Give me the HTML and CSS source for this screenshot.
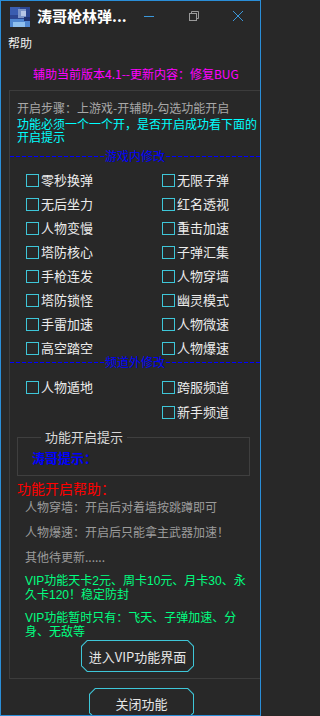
FILE: index.html
```html
<!DOCTYPE html>
<html lang="zh">
<head>
<meta charset="utf-8">
<title>涛哥枪林弹雨</title>
<link rel="stylesheet" href="styles.css">
</head>
<body>
<div class="window">
  <div class="titlebar">
    <svg class="app-icon" width="20" height="20" viewBox="0 0 20 20">
      <rect width="20" height="20" fill="#2c4691"/>
      <rect x="0" y="0" width="10" height="8" fill="#3a5db0"/>
      <rect x="8" y="2" width="8" height="9" fill="#7d95c8"/>
      <rect x="11" y="4" width="5" height="5" fill="#b7c6e6"/>
      <rect x="0" y="12" width="20" height="8" fill="#4f86d0"/>
      <rect x="3" y="15" width="12" height="5" fill="#8fc0ee"/>
      <rect x="14" y="10" width="6" height="4" fill="#1f3270"/>
    </svg>
    <div class="title">涛哥枪林弹...</div>
    <div class="ctl">
      <svg width="12" height="12" viewBox="0 0 12 12"><line x1="1" y1="6.5" x2="11" y2="6.5" stroke="#3b97d9" stroke-width="1"/></svg>
    </div>
    <div class="ctl">
      <svg width="12" height="12" viewBox="0 0 12 12" fill="none" stroke="#9a9a9a" stroke-width="1"><rect x="1.5" y="3.5" width="7" height="7"/><path d="M3.5 3.5V1.5H10.5V8.5H8.5"/></svg>
    </div>
    <div class="ctl ctl-close">
      <svg width="12" height="12" viewBox="0 0 12 12"><path d="M1 1L11 11M11 1L1 11" stroke="#3b97d9" stroke-width="1"/></svg>
    </div>
  </div>
  <div class="menu">帮助</div>
  <div class="version">辅助当前版本4.1--更新内容：修复BUG</div>

  <div class="panel">
    <div class="steps">开启步骤：上游戏-开辅助-勾选功能开启</div>
    <div class="notice">功能必须一个一个开，是否开启成功看下面的<br>开启提示</div>

    <div class="divider"><i class="dash"></i><span>游戏内修改</span><i class="dash"></i></div>
    <div class="checks">
      <label class="chk"><span class="box"></span>零秒换弹</label>
      <label class="chk"><span class="box"></span>无限子弹</label>
      <label class="chk"><span class="box"></span>无后坐力</label>
      <label class="chk"><span class="box"></span>红名透视</label>
      <label class="chk"><span class="box"></span>人物变慢</label>
      <label class="chk"><span class="box"></span>重击加速</label>
      <label class="chk"><span class="box"></span>塔防核心</label>
      <label class="chk"><span class="box"></span>子弹汇集</label>
      <label class="chk"><span class="box"></span>手枪连发</label>
      <label class="chk"><span class="box"></span>人物穿墙</label>
      <label class="chk"><span class="box"></span>塔防锁怪</label>
      <label class="chk"><span class="box"></span>幽灵模式</label>
      <label class="chk"><span class="box"></span>手雷加速</label>
      <label class="chk"><span class="box"></span>人物微速</label>
      <label class="chk"><span class="box"></span>高空踏空</label>
      <label class="chk"><span class="box"></span>人物爆速</label>
    </div>

    <div class="divider second"><i class="dash"></i><span>频道外修改</span><i class="dash"></i></div>
    <div class="checks checks2">
      <label class="chk"><span class="box"></span>人物遁地</label>
      <label class="chk"><span class="box"></span>跨服频道</label>
      <span></span>
      <label class="chk"><span class="box"></span>新手频道</label>
    </div>

    <fieldset class="hint">
      <legend>功能开启提示</legend>
      <div class="hint-text">涛哥提示：</div>
    </fieldset>

    <div class="help-title">功能开启帮助：</div>
    <div class="help-line first">人物穿墙：开启后对着墙按跳蹲即可</div>
    <div class="help-line">人物爆速：开启后只能拿主武器加速！</div>
    <div class="help-line">其他待更新......</div>
    <div class="vip first">VIP功能天卡2元、周卡10元、月卡30、永<br>久卡120！稳定防封</div>
    <div class="vip">VIP功能暂时只有：飞天、子弹加速、分<br>身、无敌等</div>

    <div class="btn btn-vip"><div class="btn-inner">进入VIP功能界面</div></div>
  </div>

  <div class="btn btn-close"><div class="btn-inner">关闭功能</div></div>
</div>
</body>
</html>
```

FILE: styles.css
```css
html, body {
  margin: 0;
  padding: 0;
  background: #282828;
}
body {
  width: 261px;
  height: 716px;
  overflow: hidden;
  font-family: "Noto Sans CJK SC", "Noto Sans", sans-serif;
}
.window {
  box-sizing: border-box;
  width: 261px;
  height: 716px;
  border: 1px solid #2a8ed8;
  overflow: hidden;
  background: #282828;
}
.titlebar {
  display: flex;
  align-items: center;
  height: 33px;
}
.app-icon {
  margin-left: 9px;
  margin-top: -2px;
  flex: none;
}
.title {
  flex: 1;
  min-width: 0;
  margin-left: 7px;
  color: #ffffff;
  font-size: 15px;
  font-weight: bold;
  line-height: 20px;
  margin-top: -3px;
  white-space: nowrap;
}
.ctl {
  flex: none;
  width: 45px;
  height: 30px;
  display: flex;
  align-items: center;
  justify-content: center;
  margin-top: -4px;
}
.ctl-close {
  width: 44px;
}
.menu {
  height: 17px;
  line-height: 17px;
  padding-left: 7px;
  color: #f0f0f0;
  font-size: 12px;
}
.version {
  margin-top: 16px;
  padding-left: 32px;
  color: #ff00ff;
  font-size: 12px;
  line-height: 14px;
  white-space: nowrap;
}
.panel {
  box-sizing: border-box;
  margin-top: 9px;
  margin-left: 8px;
  height: 589px;
  border: 1px solid #3c3c3c;
  border-right: none;
  overflow: hidden;
}
.steps {
  margin-top: 10px;
  padding-left: 7px;
  color: #a8a8a8;
  font-size: 12px;
  line-height: 14px;
  white-space: nowrap;
}
.notice {
  margin-top: 4px;
  padding-left: 7px;
  color: #00ffff;
  font-family: "Liberation Sans", "Noto Sans CJK SC", sans-serif;
  font-size: 12px;
  line-height: 13px;
  white-space: nowrap;
}
.divider {
  margin-top: 4px;
  height: 14px;
  display: flex;
  align-items: center;
}
.divider .dash {
  flex: 1;
  height: 1px;
  margin-top: 1px;
  background-image: repeating-linear-gradient(90deg, #0000ff 0, #0000ff 4px, transparent 4px, transparent 6px);
}
.divider span {
  flex: none;
  color: #0000ff;
  font-size: 12px;
  line-height: 14px;
  padding: 0 1px;
}
.divider.second {
  margin-top: -3px;
}
.checks {
  display: grid;
  grid-template-columns: 136px 1fr;
  grid-auto-rows: 20px;
  row-gap: 4px;
  padding-left: 16px;
  margin-top: 7px;
}
.checks2 {
  margin-top: 8px;
  row-gap: 5px;
}
.chk {
  display: flex;
  align-items: center;
  gap: 2px;
  color: #ececec;
  font-size: 13px;
  line-height: 20px;
  white-space: nowrap;
}
.box {
  box-sizing: border-box;
  width: 13px;
  height: 13px;
  border: 1px solid #3ec6d8;
  flex: none;
}
.hint {
  margin: 7px 10px 0 7px;
  padding: 5px 14px 9px 14px;
  border: 1px solid #3f3f3f;
  min-width: 0;
}
.hint legend {
  margin-left: 9px;
  padding: 0 4px;
  color: #d8d8d8;
  font-size: 13px;
  line-height: 16px;
}
.hint-text {
  color: #0000ff;
  font-size: 13px;
  font-weight: bold;
  line-height: 16px;
}
.help-title {
  margin-top: 3px;
  padding-left: 7px;
  color: #ff0000;
  font-size: 14px;
  line-height: 18px;
}
.help-line {
  margin-top: 11px;
  padding-left: 15px;
  color: #9c9c9c;
  font-size: 12px;
  line-height: 14px;
  white-space: nowrap;
}
.help-line.first {
  margin-top: 3px;
}
.vip {
  margin-top: 10px;
  padding-left: 15px;
  color: #00ff80;
  font-family: "Liberation Sans", "Noto Sans CJK SC", sans-serif;
  font-size: 12px;
  line-height: 13.5px;
  white-space: nowrap;
}
.vip.first {
  margin-top: 11px;
}
.btn {
  box-sizing: border-box;
  padding: 1px;
  background: #3ec6d8;
  clip-path: polygon(6px 0, calc(100% - 6px) 0, 100% 6px, 100% calc(100% - 6px), calc(100% - 6px) 100%, 6px 100%, 0 calc(100% - 6px), 0 6px);
}
.btn-inner {
  height: 100%;
  display: flex;
  align-items: center;
  justify-content: center;
  background: #282828;
  color: #e6e6e6;
  font-size: 13px;
  clip-path: polygon(5.5px 0, calc(100% - 5.5px) 0, 100% 5.5px, 100% calc(100% - 5.5px), calc(100% - 5.5px) 100%, 5.5px 100%, 0 calc(100% - 5.5px), 0 5.5px);
}
.btn-vip {
  width: 113px;
  height: 32px;
  margin-top: 1px;
  margin-left: 71px;
}
.btn-close {
  width: 105px;
  height: 31px;
  margin-top: 9px;
  margin-left: 88px;
}
```
